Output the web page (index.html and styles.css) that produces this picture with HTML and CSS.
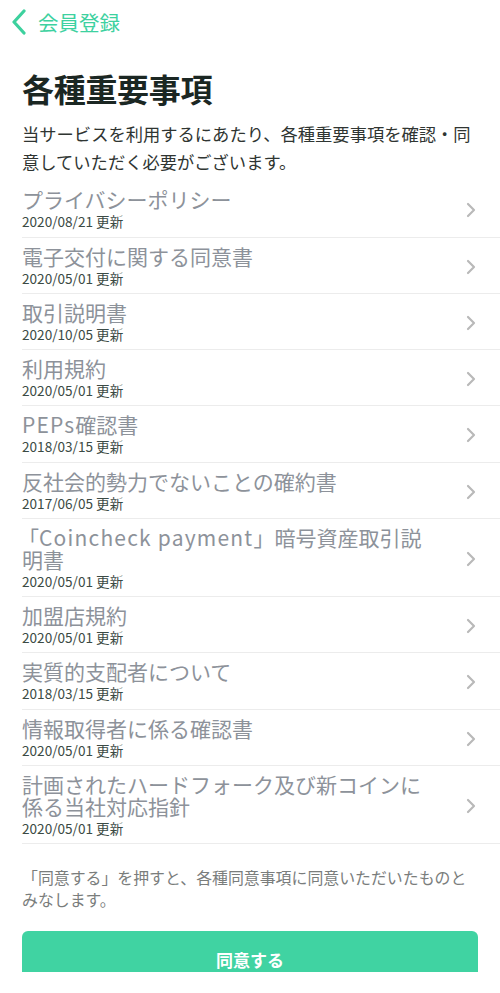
FILE: index.html
```html
<!DOCTYPE html>
<html lang="ja">
<head>
<meta charset="utf-8">
<link rel="stylesheet" href="styles.css">
</head>
<body>
<div class="page">
  <header class="nav">
    <svg class="back" width="16" height="26" viewBox="0 0 16 26"><path d="M13 2 L3 13 L13 24" fill="none" stroke="#3dd19e" stroke-width="3.2" stroke-linecap="round" stroke-linejoin="round"/></svg>
    <span class="nav-title">会員登録</span>
  </header>
  <main class="content">
    <h1 class="title">各種重要事項</h1>
    <p class="desc">当サービスを利用するにあたり、各種重要事項を確認・同意していただく必要がございます。</p>
    <ul class="list">
      <li class="item"><div class="text"><div class="name">プライバシーポリシー</div><div class="date">2020/08/21 更新</div></div><svg class="chev" width="12" height="18" viewBox="0 0 12 18"><path d="M3 3 L9 9 L3 15" fill="none" stroke="#b9b9b9" stroke-width="2.2" stroke-linecap="round" stroke-linejoin="round"/></svg></li>
      <li class="item"><div class="text"><div class="name">電子交付に関する同意書</div><div class="date">2020/05/01 更新</div></div><svg class="chev" width="12" height="18" viewBox="0 0 12 18"><path d="M3 3 L9 9 L3 15" fill="none" stroke="#b9b9b9" stroke-width="2.2" stroke-linecap="round" stroke-linejoin="round"/></svg></li>
      <li class="item"><div class="text"><div class="name">取引説明書</div><div class="date">2020/10/05 更新</div></div><svg class="chev" width="12" height="18" viewBox="0 0 12 18"><path d="M3 3 L9 9 L3 15" fill="none" stroke="#b9b9b9" stroke-width="2.2" stroke-linecap="round" stroke-linejoin="round"/></svg></li>
      <li class="item"><div class="text"><div class="name">利用規約</div><div class="date">2020/05/01 更新</div></div><svg class="chev" width="12" height="18" viewBox="0 0 12 18"><path d="M3 3 L9 9 L3 15" fill="none" stroke="#b9b9b9" stroke-width="2.2" stroke-linecap="round" stroke-linejoin="round"/></svg></li>
      <li class="item"><div class="text"><div class="name"><span class="latin">PEPs</span>確認書</div><div class="date">2018/03/15 更新</div></div><svg class="chev" width="12" height="18" viewBox="0 0 12 18"><path d="M3 3 L9 9 L3 15" fill="none" stroke="#b9b9b9" stroke-width="2.2" stroke-linecap="round" stroke-linejoin="round"/></svg></li>
      <li class="item"><div class="text"><div class="name">反社会的勢力でないことの確約書</div><div class="date">2017/06/05 更新</div></div><svg class="chev" width="12" height="18" viewBox="0 0 12 18"><path d="M3 3 L9 9 L3 15" fill="none" stroke="#b9b9b9" stroke-width="2.2" stroke-linecap="round" stroke-linejoin="round"/></svg></li>
      <li class="item"><div class="text"><div class="name"><span class="bracket">「</span><span class="latin">Coincheck payment</span>」暗号資産取引説<br>明書</div><div class="date">2020/05/01 更新</div></div><svg class="chev" width="12" height="18" viewBox="0 0 12 18"><path d="M3 3 L9 9 L3 15" fill="none" stroke="#b9b9b9" stroke-width="2.2" stroke-linecap="round" stroke-linejoin="round"/></svg></li>
      <li class="item"><div class="text"><div class="name">加盟店規約</div><div class="date">2020/05/01 更新</div></div><svg class="chev" width="12" height="18" viewBox="0 0 12 18"><path d="M3 3 L9 9 L3 15" fill="none" stroke="#b9b9b9" stroke-width="2.2" stroke-linecap="round" stroke-linejoin="round"/></svg></li>
      <li class="item"><div class="text"><div class="name">実質的支配者について</div><div class="date">2018/03/15 更新</div></div><svg class="chev" width="12" height="18" viewBox="0 0 12 18"><path d="M3 3 L9 9 L3 15" fill="none" stroke="#b9b9b9" stroke-width="2.2" stroke-linecap="round" stroke-linejoin="round"/></svg></li>
      <li class="item"><div class="text"><div class="name">情報取得者に係る確認書</div><div class="date">2020/05/01 更新</div></div><svg class="chev" width="12" height="18" viewBox="0 0 12 18"><path d="M3 3 L9 9 L3 15" fill="none" stroke="#b9b9b9" stroke-width="2.2" stroke-linecap="round" stroke-linejoin="round"/></svg></li>
      <li class="item"><div class="text"><div class="name">計画されたハードフォーク及び新コインに<br>係る当社対応指針</div><div class="date">2020/05/01 更新</div></div><svg class="chev" width="12" height="18" viewBox="0 0 12 18"><path d="M3 3 L9 9 L3 15" fill="none" stroke="#b9b9b9" stroke-width="2.2" stroke-linecap="round" stroke-linejoin="round"/></svg></li>
    </ul>
    <p class="note">「同意する」を押すと、各種同意事項に同意いただいたものとみなします。</p>
    <div class="btn-wrap"><button class="btn">同意する</button></div>
  </main>
</div>
</body>
</html>
```

FILE: styles.css
```css
* { box-sizing: border-box; }
html, body { margin: 0; padding: 0; background: #fff; }
body {
  font-family: "Noto Sans CJK JP", "Noto Sans", sans-serif;
  width: 500px;
  height: 993px;
  overflow: hidden;
}
.page { width: 500px; }
.nav {
  height: 44px;
  display: flex;
  align-items: center;
  padding-left: 11px;
  gap: 11px;
}
.back { display: block; }
.nav-title {
  font-size: 20.5px;
  color: #3dd1a0;
  line-height: 24px;
}
.content { padding-left: 22px; }
.title {
  margin: 24px 0 0;
  font-size: 32px;
  line-height: 40px;
  font-weight: 700;
  color: #1b2723;
  letter-spacing: -0.3px;
}
.desc {
  margin: 12px 22px 0 0;
  font-size: 17.3px;
  line-height: 28px;
  color: #2f3532;
}
.list {
  list-style: none;
  margin: 5px 0 0;
  padding: 0;
}
.item {
  display: flex;
  align-items: center;
  padding: 7px 23px 4px 0;
  border-bottom: 1px solid #ececec;
}
.item:nth-child(4n+1) { padding-bottom: 5px; }
.text { flex: 1; min-width: 0; }
.name {
  font-size: 21px;
  line-height: 22px;
  color: #8d929a;
  white-space: nowrap;
}
.latin { letter-spacing: 1.2px; }
.bracket { margin-left: -4px; }
.date {
  font-size: 13.6px;
  line-height: 22px;
  color: #3b4a44;
}
.chev { display: block; flex: none; }
.note {
  margin: 23px 22px 0 0;
  font-size: 15.9px;
  line-height: 22px;
  color: #7a7d7c;
}
.btn-wrap { margin-top: 20px; padding-right: 22px; }
.btn {
  display: block;
  width: 100%;
  height: 41px;
  border: none;
  border-radius: 6px 6px 0 0;
  background: #40d3a2;
  color: #fff;
  font-family: "Noto Sans CJK JP", sans-serif;
  font-size: 17px;
  font-weight: 700;
  padding: 17px 0 0;
  line-height: 22px;
}
```
